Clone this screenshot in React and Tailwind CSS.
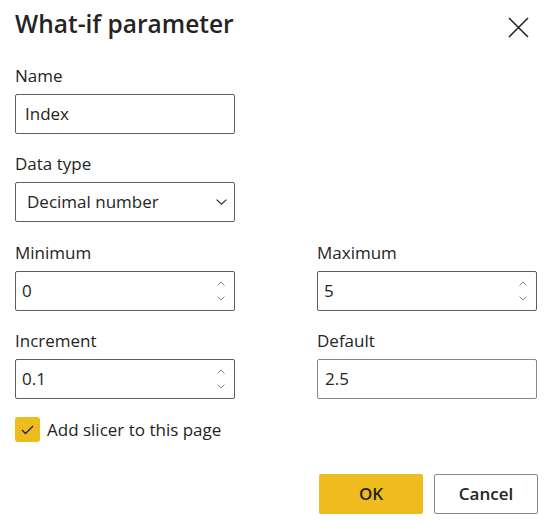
const font = { fontFamily: '"Open Sans", "Noto Sans", sans-serif' };

function Spinner() {
  return (
    <div className="flex flex-col gap-[10px] pr-[9px] text-[#8a8886]">
      <svg width="8" height="5" viewBox="0 0 8 5" fill="none">
        <path d="M0.5 4.5 L4 1 L7.5 4.5" stroke="currentColor" strokeWidth="1" />
      </svg>
      <svg width="8" height="5" viewBox="0 0 8 5" fill="none">
        <path d="M0.5 0.5 L4 4 L7.5 0.5" stroke="currentColor" strokeWidth="1" />
      </svg>
    </div>
  );
}

function Field({ label, value, spin, light, pad = 'pl-[6px]' }) {
  return (
    <div>
      <label className="block h-6 leading-6 text-[17px] text-[#252423] mb-[6px]">{label}</label>
      <div className={`flex items-center justify-between h-10 rounded-[2px] border ${light ? 'border-[#8a8886]' : 'border-[#605e5c]'} bg-white`}>
        <span className={`${pad} text-[17px] text-[#252423]`}>{value}</span>
        {spin && <Spinner />}
      </div>
    </div>
  );
}

export default function App() {
  return (
    <div className="w-[556px] h-[522px] bg-white px-[15px]" style={font}>
      <div className="flex items-start justify-between pt-[8px]">
        <h1 className="text-[24.5px] leading-8 font-semibold text-[#252423]">What-if parameter</h1>
        <button className="mt-[9px] mr-[12px] text-[#252423]">
          <svg width="21" height="21" viewBox="0 0 21 21" fill="none">
            <path d="M1 1 L20 20 M20 1 L1 20" stroke="currentColor" strokeWidth="1.6" />
          </svg>
        </button>
      </div>

      <div className="mt-[24px] w-[220px]">
        <Field label="Name" value="Index" pad="pl-[9px]" />
      </div>

      <div className="mt-[18px] w-[220px]">
        <label className="block h-6 leading-6 text-[17px] text-[#252423] mb-[6px]">Data type</label>
        <div className="flex items-center justify-between h-10 rounded-[2px] border border-[#605e5c] bg-white">
          <span className="pl-[11px] text-[17px] text-[#252423]">Decimal number</span>
          <svg width="11" height="6" viewBox="0 0 11 6" fill="none" className="mr-[7px] text-[#252423]">
            <path d="M0.6 0.6 L5.5 5.2 L10.4 0.6" stroke="currentColor" strokeWidth="1.1" />
          </svg>
        </div>
      </div>

      <div className="grid grid-cols-[220px_220px] gap-x-[82px] mt-[19px]">
        <Field label="Minimum" value="0" spin />
        <Field label="Maximum" value="5" spin />
      </div>

      <div className="grid grid-cols-[220px_220px] gap-x-[82px] mt-[18px]">
        <Field label="Increment" value="0.1" spin />
        <Field label="Default" value="2.5" light pad="pl-[7px]" />
      </div>

      <div className="flex items-center gap-[7px] mt-[18px]">
        <div className="w-[25px] h-[25px] rounded-[3px] bg-[#efbc1f] flex items-center justify-center">
          <svg width="13" height="10" viewBox="0 0 13 10" fill="none">
            <path d="M1 5 L4.5 8.5 L12 1" stroke="#252423" strokeWidth="1.3" />
          </svg>
        </div>
        <span className="text-[17px] text-[#252423]">Add slicer to this page</span>
      </div>

      <div className="flex justify-end gap-[11px] mt-[31px] pr-[3px]">
        <button className="w-[104px] h-10 rounded-[2px] bg-[#efbc1f] text-[17px] font-semibold text-[#252423]">OK</button>
        <button className="w-[104px] h-10 rounded-[2px] border border-[#8a8886] bg-white text-[17px] font-semibold text-[#252423]">Cancel</button>
      </div>
    </div>
  );
}
